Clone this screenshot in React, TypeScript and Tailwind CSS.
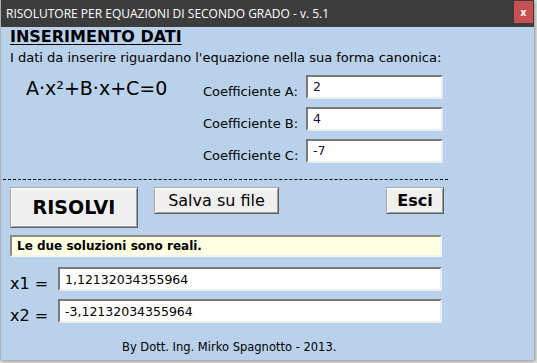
import React from 'react';

const VERDANA = { fontFamily: '"DejaVu Sans", Verdana, sans-serif' };

function Field({ value, className }: { value: string; className: string }) {
  return (
    <div
      className={`${className} h-[24px] bg-white border-t-2 border-l-2 border-b-2 border-r-2 border-t-[#7a7a7a] border-l-[#7a7a7a] border-b-[#ececec] border-r-[#ececec] pl-[5px] text-[12.5px] leading-[15px] text-[#10103a]`}
    >
      {value}
    </div>
  );
}

function Button({ children, className }: { children: React.ReactNode; className: string }) {
  return (
    <div
      className={`${className} flex items-center justify-center bg-[#f0f0f0] border border-t-[#a8a8a8] border-l-[#a8a8a8] border-b-[#5c5c5c] border-r-[#5c5c5c] shadow-[inset_1px_1px_0_#ffffff,inset_-1px_-1px_0_#a0a0a0] text-black`}
    >
      {children}
    </div>
  );
}

const coefficients = [
  { label: 'Coefficiente A:', value: '2' },
  { label: 'Coefficiente B:', value: '4' },
  { label: 'Coefficiente C:', value: '-7' },
];

export default function App() {
  return (
    <div className="w-[537px] h-[363px] bg-[#dedede] overflow-hidden">
      <div className="w-[534px] h-[360px] flex flex-col border-l border-[#b0b0b0] shadow-[1px_1px_3px_rgba(0,0,0,0.35)]">
        {/* title bar */}
        <div className="h-[27px] bg-[#3c3c3c] flex items-start justify-between">
          <span
            className="pl-[5px] pt-[6px] text-[12px] leading-[16px] text-white"
            style={{ fontFamily: '"Open Sans", "Noto Sans", sans-serif' }}
          >
            RISOLUTORE PER EQUAZIONI DI SECONDO GRADO - v. 5.1
          </span>
          <div className="mt-[1px] mr-[1px] w-[19px] h-[22px] bg-[#c75050] flex items-center justify-center text-white text-[10px] font-bold leading-none">
            x
          </div>
        </div>

        {/* form body */}
        <div className="flex-1 flex flex-col bg-[#b9d1ea] pl-[9px]" style={VERDANA}>
          <h1 className="h-[20px] text-[16px] leading-[20px] font-bold underline underline-offset-[2px] text-black">
            INSERIMENTO DATI
          </h1>
          <p className="mt-[3px] text-[13px] leading-[16px] text-black">
            I dati da inserire riguardano l'equazione nella sua forma canonica:
          </p>

          <div className="mt-[9px] flex items-start">
            <div className="w-[193px] pl-[16px] pt-[1px] text-[19px] leading-[24px] text-black">
              A·x²+B·x+C=0
            </div>
            <div className="flex flex-col gap-[8px]">
              {coefficients.map((c) => (
                <div key={c.label} className="flex items-start h-[24px]">
                  <span className="w-[103px] pt-[9px] text-[13px] leading-[16px] text-black">{c.label}</span>
                  <Field value={c.value} className="w-[137px] pt-[2px]" />
                </div>
              ))}
            </div>
          </div>

          <div className="mt-[16px] ml-[-7px] w-[445px] border-t border-dashed border-black" />

          <div className="mt-[7px] flex items-start">
            <Button className="w-[128px] h-[41px] text-[19px] font-bold">RISOLVI</Button>
            <Button className="ml-[16px] w-[125px] h-[27px] text-[16px]">Salva su file</Button>
            <Button className="ml-[107px] w-[58px] h-[27px] text-[16px] font-bold">Esci</Button>
          </div>

          <div className="mt-[7px] w-[432px] h-[22px] bg-[#ffffe1] border-t-2 border-l-2 border-b-2 border-r-2 border-t-[#8a8a8a] border-l-[#8a8a8a] border-b-[#f4f4f4] border-r-[#f4f4f4] pl-[5px] pt-[2px] text-[12px] leading-[14px] font-bold text-black">
            Le due soluzioni sono reali.
          </div>

          <div className="mt-[10px] flex items-start h-[24px]">
            <span className="w-[48px] pt-[7px] text-[16px] leading-[20px] text-black">x1 =</span>
            <Field value="1,12132034355964" className="w-[384px] pt-[3px] text-black" />
          </div>
          <div className="mt-[8px] flex items-start h-[24px]">
            <span className="w-[48px] pt-[7px] text-[16px] leading-[20px] text-black">x2 =</span>
            <Field value="-3,12132034355964" className="w-[384px] pt-[3px] text-black" />
          </div>

          <p className="mt-[17px] pl-[112px] text-[11.5px] leading-[14px] text-black">
            By Dott. Ing. Mirko Spagnotto - 2013.
          </p>
        </div>
      </div>
    </div>
  );
}
